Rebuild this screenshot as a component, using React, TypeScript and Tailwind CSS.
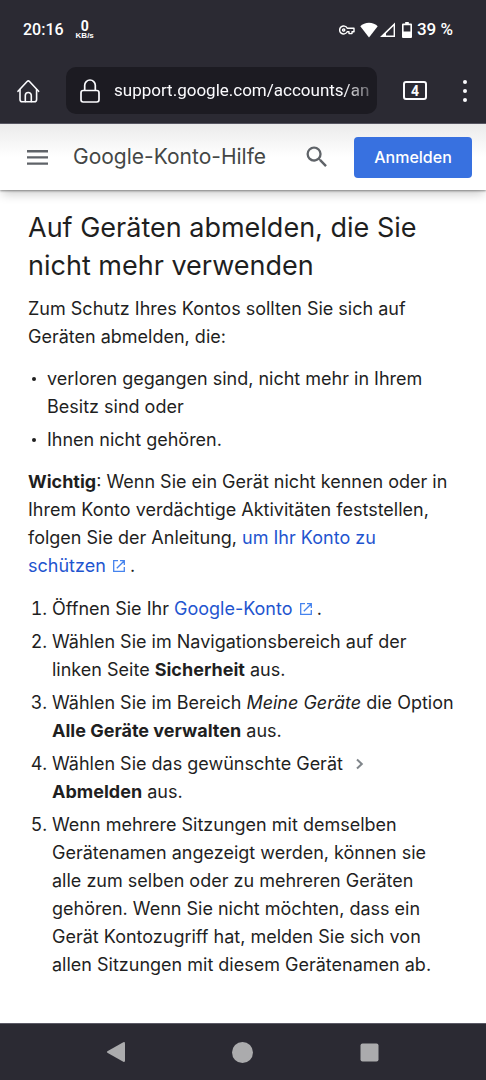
import type { ReactNode } from 'react';

const StatusBar = () => (
  <div className="flex h-[58px] items-center justify-between pl-[23px] pr-[33px] pt-0.5 text-[17px] font-medium text-white">
    <div className="flex items-center gap-3">
      <span className="text-[16px]">20:16</span>
      <span className="flex flex-col items-center font-bold">
        <span className="text-[14px] leading-[12px]">0</span>
        <span className="font-['Liberation_Sans'] text-[8px] leading-[8px]">KB/s</span>
      </span>
    </div>
    <div className="flex items-center">
      <svg className="mr-[5px] h-2.5 w-4" viewBox="0 0 16 10" fill="none" stroke="currentColor" strokeWidth="1.4">
        <path d="M8.2 3.2A4 4 0 1 0 8.2 6.8H10V8.6H13V6.8H15V3.2Z" strokeLinejoin="round" />
        <circle cx="4.7" cy="5" r="1.1" />
      </svg>
      <svg className="mr-0.5 h-4 w-[18px]" viewBox="0 0 18 16" fill="currentColor">
        <path d="M9 15.5.3 4.2C2.400 2 5.600.7 9 .7s6.600 1.300 8.700 3.500Z" />
      </svg>
      <svg className="mr-[7px] h-4 w-[15px]" viewBox="0 0 15 16" fill="currentColor">
        <path d="M15 .5V15H0ZM13.600 4 6 11.500V13.600h7.600Z" fillRule="evenodd" />
      </svg>
      <svg className="mr-[5px] h-4 w-2.5" viewBox="0 0 10 16">
        <path
          d="M3.200 0h3.600v1.600H9a1 1 0 0 1 1 1V15a1 1 0 0 1-1 1H1a1 1 0 0 1-1-1V2.600a1 1 0 0 1 1-1h2.200ZM1.600 3.200v6.300h6.800V3.200Z"
          fill="currentColor"
          fillRule="evenodd"
        />
      </svg>
      <span>39 %</span>
    </div>
  </div>
);

const BrowserBar = () => (
  <div className="flex h-[66px] items-center border-b border-[#5b5a66] pl-4 pr-[9px] text-[#fbfbfe]">
    <button type="button" aria-label="Startseite" className="shrink-0">
      <svg
        className="h-6 w-6"
        viewBox="0 0 24 24"
        fill="none"
        stroke="currentColor"
        strokeWidth="1.6"
        strokeLinecap="round"
        strokeLinejoin="round"
      >
        <path d="M2 12.300 11.100 2.500Q12.300 1.300 13.500 2.500L22.600 12.300" />
        <path d="M4 10.500V20.500Q4 22.800 6.300 22.800H18.300Q20.600 22.800 20.600 20.500V10.500" />
        <path d="M9.300 22.600V16.500A3 3 0 0 1 15.300 16.500V22.600" />
      </svg>
    </button>
    <label className="ml-[26px] flex h-[47px] min-w-0 flex-1 items-center rounded-[10px] bg-[#1c1b22] pl-3.5 pr-0.5">
      <svg
        className="mr-3.5 h-6 w-5 shrink-0"
        viewBox="0 0 20 24"
        fill="none"
        stroke="currentColor"
        strokeWidth="1.7"
        strokeLinejoin="round"
      >
        <rect x="1" y="11.500" width="18" height="11.500" rx="2.200" />
        <path d="M4.700 11.500V6.300A5.300 5.300 0 0 1 15.300 6.300V11.500" />
      </svg>
      <input
        type="text"
        aria-label="Adresse"
        defaultValue="support.google.com/accounts/an"
        className="min-w-0 flex-1 bg-transparent text-[17px] outline-none [mask-image:linear-gradient(to_right,black_calc(100%-32px),rgba(0,0,0,0.2))]"
      />
    </label>
    <button
      type="button"
      aria-label="4 Tabs"
      className="ml-[26px] flex h-[19px] w-6 shrink-0 items-center justify-center rounded-[3px] border-2 border-[#fbfbfe] text-[14px] font-bold leading-none"
    >
      4
    </button>
    <button type="button" aria-label="Menü" className="ml-[26px] flex w-6 shrink-0 justify-center">
      <svg className="h-6 w-1" viewBox="0 0 4 24" fill="currentColor">
        <circle cx="2" cy="3" r="2" />
        <circle cx="2" cy="12" r="2" />
        <circle cx="2" cy="21" r="2" />
      </svg>
    </button>
  </div>
);

const HelpHeader = () => (
  <header className="z-10 flex h-[66px] items-center bg-linear-to-b from-[#ebebeb] to-white to-50% pl-[27px] pr-3.5 shadow-[0_1px_2px_rgba(0,0,0,0.4),0_6px_10px_-2px_rgba(0,0,0,0.2)]">
    <button type="button" aria-label="Hauptmenü" className="shrink-0 text-[#5f6368]">
      <svg className="h-[15px] w-[21px]" viewBox="0 0 21 15" fill="currentColor">
        <path d="M0 0h21v2.400H0ZM0 6.200h21v2.400H0ZM0 12.400h21v2.400H0Z" />
      </svg>
    </button>
    <a href="#" className="ml-[25px] whitespace-nowrap font-[Inter] text-[21px] text-[#444746]">
      Google-Konto-Hilfe
    </a>
    <button type="button" aria-label="Suchen" className="ml-auto shrink-0 text-[#5f6368]">
      <svg className="h-7 w-7" viewBox="0 0 24 24" fill="currentColor">
        <path d="M15.500 14h-.79l-.28-.27A6.470 6.470 0 0 0 16 9.500 6.500 6.500 0 1 0 9.500 16c1.610 0 3.090-.59 4.230-1.570l.27.28v.79l5 4.990L20.490 19zm-6 0C7.010 14 5 11.990 5 9.500S7.010 5 9.500 5 14 7.010 14 9.500 11.990 14 9.500 14" />
      </svg>
    </button>
    <button
      type="button"
      className="ml-[23px] h-[41px] w-[118px] shrink-0 rounded-[4px] bg-[#3871e0] font-[Inter] text-[16px] font-medium text-white"
    >
      Anmelden
    </button>
  </header>
);

const ExternalLink = ({ children }: { children: ReactNode }) => (
  <a href="#" className="text-[#1f55cf]">
    {children}
    {'\u00a0'}
    <svg className="ml-0.5 inline h-3 w-3 align-baseline" viewBox="0 0 12 12" fill="none" stroke="#4583ee" strokeWidth="1.300">
      <path d="M5 .7H.7V11.300H11.300V7M7 .7H11.300V5M11.300.7 3.800 8.200" />
    </svg>
  </a>
);

const Article = () => (
  <main className="flex-1 pb-11 pl-7 pr-[26px] pt-[19px] font-[Inter] text-[18px] leading-7 text-[#1f1f1f]">
    <h1 className="text-[27px] leading-[38px]">Auf Geräten abmelden, die Sie nicht mehr verwenden</h1>
    <p className="mt-2.5">Zum Schutz Ihres Kontos sollten Sie sich auf Geräten abmelden, die:</p>
    <ul className="mt-3.5 list-none space-y-[5px]">
      {['verloren gegangen sind, nicht mehr in Ihrem Besitz sind oder', 'Ihnen nicht gehören.'].map((item) => (
        <li key={item} className="flex">
          <span className="flex h-7 w-[19px] shrink-0 items-center pl-1">
            <span className="h-1 w-1 rounded-full bg-[#1f1f1f]" />
          </span>
          <span>{item}</span>
        </li>
      ))}
    </ul>
    <p className="mt-3.5">
      <b>Wichtig</b>: Wenn Sie ein Gerät nicht kennen oder in Ihrem Konto verdächtige Aktivitäten feststellen, folgen Sie
      der Anleitung, <ExternalLink>um Ihr Konto zu schützen</ExternalLink> .
    </p>
    <ol className="mt-[15px] list-decimal space-y-[5px] pl-6">
      <li>
        Öffnen Sie Ihr <ExternalLink>Google-Konto</ExternalLink> .
      </li>
      <li>
        Wählen Sie im Navigationsbereich auf der linken Seite <b>Sicherheit</b> aus.
      </li>
      <li>
        Wählen Sie im Bereich <i>Meine Geräte</i> die Option <b>Alle Geräte verwalten</b> aus.
      </li>
      <li>
        Wählen Sie das gewünschte Gerät{' '}
        <svg className="mx-2 inline h-3 w-2 align-baseline" viewBox="0 0 8 12" fill="none" stroke="#80868b" strokeWidth="2">
          <path d="M1 1.500 5.800 6 1 10.500" />
        </svg>{' '}
        <b>Abmelden</b> aus.
      </li>
      <li>
        Wenn mehrere Sitzungen mit demselben Gerätenamen angezeigt werden, können sie alle zum selben oder zu mehreren
        Geräten gehören. Wenn Sie nicht möchten, dass ein Gerät Kontozugriff hat, melden Sie sich von allen Sitzungen mit
        diesem Gerätenamen ab.
      </li>
    </ol>
  </main>
);

const NavigationBar = () => (
  <nav className="flex h-[57px] items-center justify-center gap-[106px] border-t border-[#5b5a66] bg-[#2b2a33] pr-0.5 text-[#ababad]">
    <button type="button" aria-label="Zurück">
      <svg className="h-[21px] w-[21px]" viewBox="0 0 21 21" fill="currentColor">
        <path d="M18.300.2Q20 -.500 20 1.500V18.500Q20 20.500 18.300 19.700L2.800 11.100Q1 10 2.800 8.900Z" />
      </svg>
    </button>
    <button type="button" aria-label="Startbildschirm">
      <svg className="h-[21px] w-[21px]" viewBox="0 0 21 21" fill="currentColor">
        <circle cx="10.500" cy="10.500" r="10.500" />
      </svg>
    </button>
    <button type="button" aria-label="Letzte Apps">
      <svg className="h-[21px] w-[21px]" viewBox="0 0 21 21" fill="currentColor">
        <rect x="1.500" y="1.500" width="18" height="18" rx="2" />
      </svg>
    </button>
  </nav>
);

const App = () => (
  <div className="flex min-h-screen flex-col bg-white font-[Roboto,sans-serif]">
    <div className="bg-[#2b2a33]">
      <StatusBar />
      <BrowserBar />
    </div>
    <HelpHeader />
    <Article />
    <NavigationBar />
  </div>
);

export default App;
